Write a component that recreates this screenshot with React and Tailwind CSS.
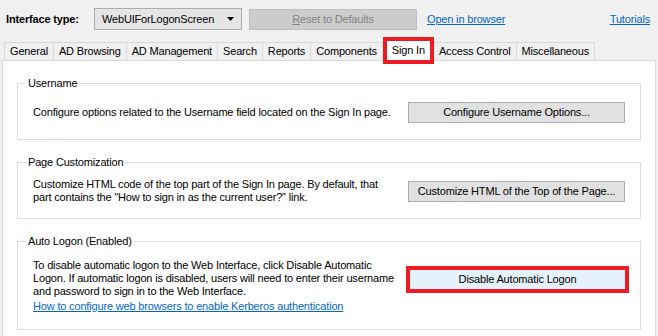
const tabs = [
  'General',
  'AD Browsing',
  'AD Management',
  'Search',
  'Reports',
  'Components',
  'Sign In',
  'Access Control',
  'Miscellaneous',
];

function GroupBox({ title, className, children }) {
  return (
    <fieldset className={`border border-[#dcdcdc] mx-[14px] px-[15px] ${className}`}>
      <legend className="ml-[-7px] px-[2px] leading-[13px]">{title}</legend>
      {children}
    </fieldset>
  );
}

function WinButton({ children }) {
  return (
    <button className="w-[217px] h-[21px] shrink-0 bg-[#e1e1e1] border border-[#adadad] text-black leading-none">
      {children}
    </button>
  );
}

export default function App() {
  return (
    <div
      className="w-[658px] h-[336px] overflow-hidden bg-[#f0f0f0] text-[11px] tracking-[-0.17px] text-black whitespace-nowrap"
      style={{ fontFamily: '"Liberation Sans", Arial, sans-serif' }}
    >
      {/* Toolbar */}
      <div className="flex items-center h-[22px] mt-[8px] pl-[6px] pr-[8px]">
        <span className="font-bold w-[88px]">Interface type:</span>
        <div className="flex items-center justify-between w-[148px] h-[22px] bg-[#e5e5e5] border border-[#adadad] pl-[7px] pr-[7px]">
          <span>WebUIForLogonScreen</span>
          <svg width="7" height="4" viewBox="0 0 7 4">
            <path d="M0 0h7L3.5 4z" fill="#000" />
          </svg>
        </div>
        <div className="ml-[7px] w-[168px] h-[21px] bg-[#cccccc] border border-[#bfbfbf] text-[#838383] flex items-center justify-center">
          <span>
            <span className="underline">R</span>eset to Defaults
          </span>
        </div>
        <a className="ml-[10px] text-[#0066cc] underline">Open in browser</a>
        <a className="ml-auto text-[#0066cc] underline">Tutorials</a>
      </div>

      {/* Tab strip */}
      <div className="flex items-end h-[30px] pl-[4px]">
        {tabs.map((t) =>
          t === 'Sign In' ? (
            <div
              key={t}
              className="relative z-10 h-[27px] -mb-[4px] border-[4px] border-[#ed1c24] bg-white px-[5px] pt-[2px] leading-[14px]"
            >
              {t}
            </div>
          ) : (
            <div
              key={t}
              className="h-[18px] border border-[#d9d9d9] border-b-0 -ml-px first:ml-0 bg-[#f0f0f0] px-[5px] leading-[17px]"
            >
              {t}
            </div>
          )
        )}
      </div>

      {/* Tab panel */}
      <div className="ml-[2px] mr-[2px] h-[300px] bg-white border border-[#d9d9d9] pt-[16px]">
        <GroupBox title="Username" className="h-[63px]">
          <div className="flex items-center justify-between h-[44px]">
            <span>Configure options related to the Username field located on the Sign In page.</span>
            <WinButton>Configure Username Options...</WinButton>
          </div>
        </GroupBox>

        <GroupBox title="Page Customization" className="h-[63px] mt-[16px]">
          <div className="flex items-start justify-between pt-[9px]">
            <span className="leading-[13px]">
              Customize HTML code of the top part of the Sign In page. By default, that
              <br />
              part contains the "How to sign in as the current user?" link.
            </span>
            <div className="mt-[3px]">
              <WinButton>Customize HTML of the Top of the Page...</WinButton>
            </div>
          </div>
        </GroupBox>

        <GroupBox title="Auto Logon (Enabled)" className="h-[95px] mt-[16px]">
          <div className="flex items-start justify-between pt-[11px]">
            <div className="leading-[13px]">
              <div>
                To disable automatic logon to the Web Interface, click Disable Automatic
                <br />
                Logon. If automatic logon is disabled, users will need to enter their username
                <br />
                and password to sign in to the Web Interface.
              </div>
              <a className="block mt-[2px] text-[#0066cc] underline">
                How to configure web browsers to enable Kerberos authentication
              </a>
            </div>
            <div className="mt-[7px] -mr-[4px] border-[4px] border-[#ed1c24]">
              <button className="w-[215px] h-[19px] bg-[#e5f1fb] border border-[#e5f1fb] leading-none">
                Disable Automatic Logon
              </button>
            </div>
          </div>
        </GroupBox>
      </div>
    </div>
  );
}
